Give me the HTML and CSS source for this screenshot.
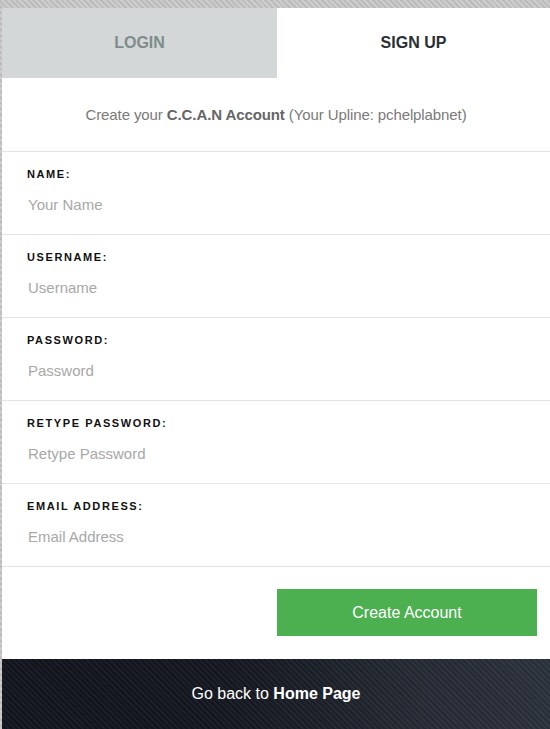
FILE: index.html
```html
<!DOCTYPE html>
<html lang="en">
<head>
<meta charset="utf-8">
<title>Sign Up</title>
<link rel="stylesheet" href="styles.css">
</head>
<body>
<div class="card">
  <div class="tabs">
    <div class="tab tab-inactive">LOGIN</div>
    <div class="tab tab-active">SIGN UP</div>
  </div>
  <div class="intro"><span>Create your <b>C.C.A.N Account</b> (Your Upline: pchelplabnet)</span></div>
  <form class="form">
    <div class="field">
      <label class="label">NAME:</label>
      <input class="input" type="text" placeholder="Your Name">
    </div>
    <div class="field">
      <label class="label">USERNAME:</label>
      <input class="input" type="text" placeholder="Username">
    </div>
    <div class="field">
      <label class="label">PASSWORD:</label>
      <input class="input" type="password" placeholder="Password">
    </div>
    <div class="field">
      <label class="label">RETYPE PASSWORD:</label>
      <input class="input" type="password" placeholder="Retype Password">
    </div>
    <div class="field">
      <label class="label">EMAIL ADDRESS:</label>
      <input class="input" type="text" placeholder="Email Address">
    </div>
    <div class="actions">
      <button class="btn" type="button">Create Account</button>
    </div>
  </form>
  <div class="footer"><span>Go back to <b>Home Page</b></span></div>
</div>
</body>
</html>
```

FILE: styles.css
```css
html, body {
  margin: 0;
  padding: 0;
}
body {
  background-color: #c6c6c6;
  background-image: repeating-linear-gradient(45deg, rgba(255,255,255,0.12) 0 2px, rgba(0,0,0,0.05) 2px 4px);
  font-family: "Liberation Sans", Arial, sans-serif;
  height: 729px;
  overflow: hidden;
}
.card {
  margin: 8px 0 0 2px;
  background: #fff;
}
.tabs {
  display: flex;
  height: 70px;
}
.tab {
  flex: 0 0 275px;
  display: flex;
  align-items: center;
  justify-content: center;
  font-size: 16px;
  font-weight: bold;
}
.tab-inactive {
  background: #d3d7d7;
  color: #7f8c8d;
}
.tab-active {
  flex: 1 1 auto;
  background: #fff;
  color: #2b2f33;
}
.intro {
  height: 74px;
  box-sizing: border-box;
  display: flex;
  align-items: center;
  justify-content: center;
  font-size: 15px;
  letter-spacing: -0.1px;
  color: #7a7a7a;
  padding-bottom: 1px;
  border-bottom: 1px solid #e4e4e4;
}
.intro b {
  color: #666;
}
.form {
  margin: 0;
}
.field {
  display: flex;
  flex-direction: column;
  padding: 15px 25px 15px 25px;
  border-bottom: 1px solid #e4e4e4;
  height: 52px;
  gap: 8px;
}
.label {
  font-size: 11px;
  font-weight: bold;
  letter-spacing: 1.6px;
  line-height: 14px;
  color: #111;
}
.input {
  border: 0;
  outline: none;
  height: 30px;
  padding: 0 0 0 1px;
  margin: 0;
  font-family: "Liberation Sans", Arial, sans-serif;
  font-size: 15px;
  color: #333;
  background: transparent;
}
.input::placeholder {
  color: #a8a8a8;
}
.actions {
  display: flex;
  justify-content: flex-end;
  padding: 22px 13px 23px 0;
}
.btn {
  width: 260px;
  height: 47px;
  border: 0;
  background: #4caf50;
  color: #fff;
  font-family: "Liberation Sans", Arial, sans-serif;
  font-size: 16px;
  padding: 0;
}
.footer {
  height: 70px;
  display: flex;
  align-items: center;
  justify-content: center;
  color: #fff;
  font-size: 16px;
  background-color: #151821;
  background-image:
    repeating-linear-gradient(45deg, rgba(255,255,255,0.035) 0 2px, rgba(0,0,0,0.06) 2px 4px),
    linear-gradient(to right, #12151d 0%, #141720 40%, #262b35 78%, #2c323c 100%);
}
```
